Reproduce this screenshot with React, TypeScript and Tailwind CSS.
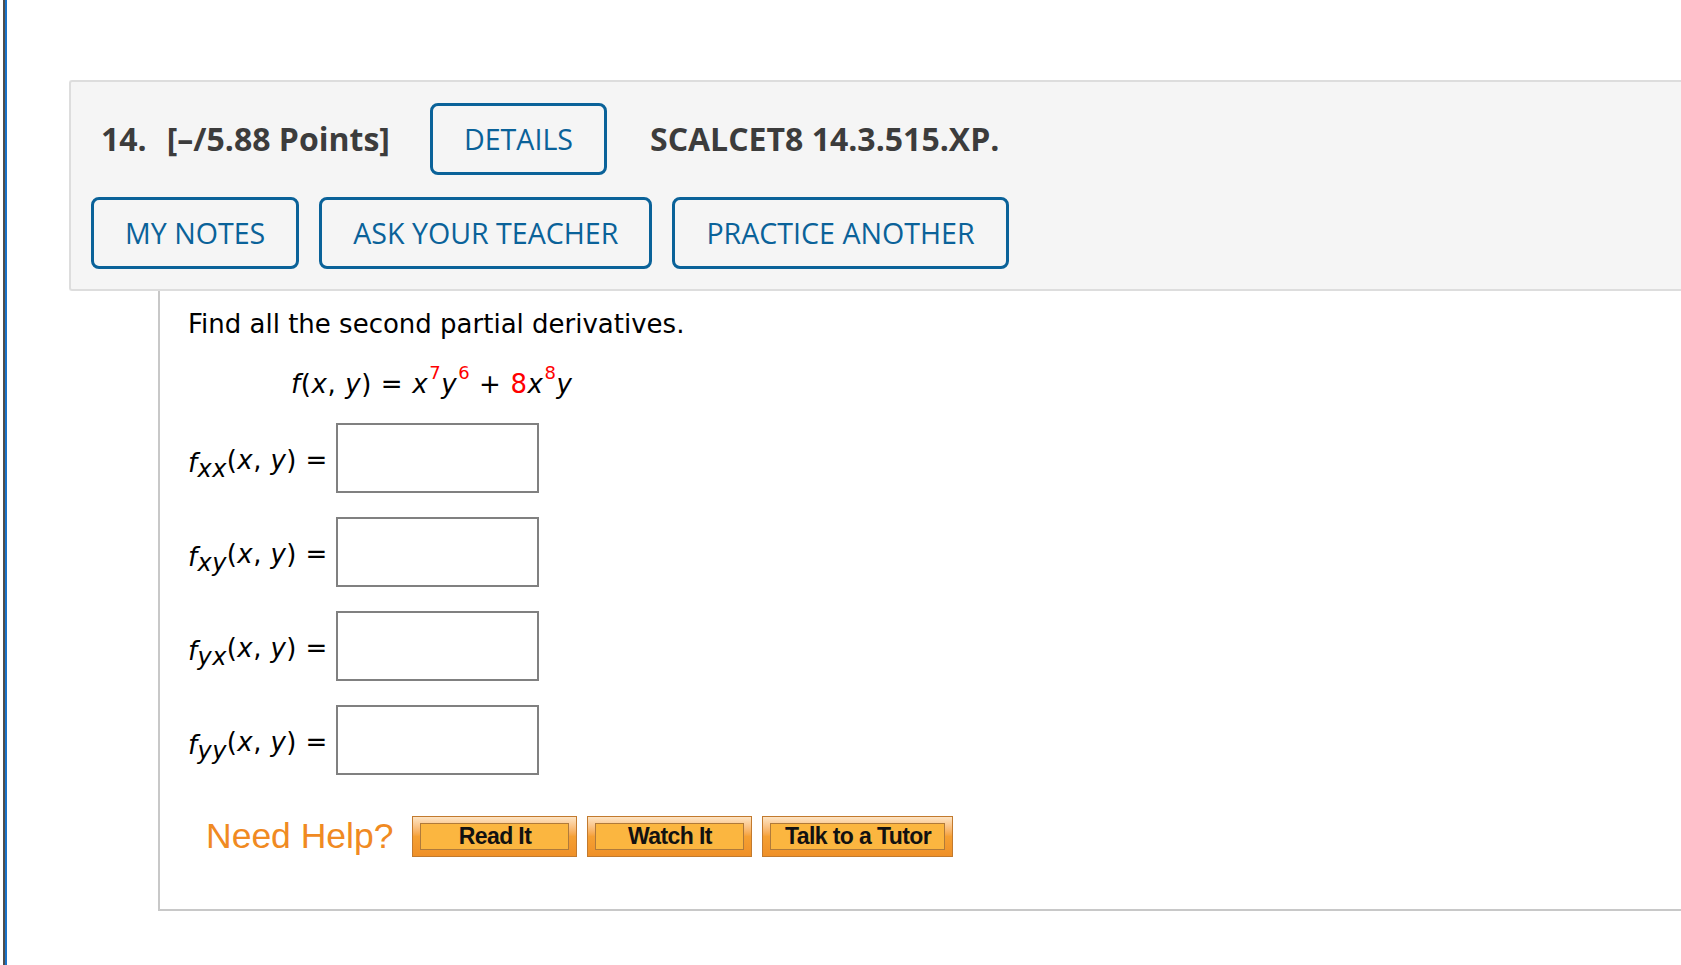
import React from "react";

const hdrFont = { fontFamily: '"Open Sans", "Liberation Sans", sans-serif' };
const bodyFont = { fontFamily: '"DejaVu Sans", Verdana, sans-serif' };
const helpFont = { fontFamily: '"Liberation Sans", Arial, sans-serif' };

function BlueButton({ children }: { children: React.ReactNode }) {
  return (
    <div className="flex h-[72px] items-center rounded-[8px] border-[3px] border-[#0a6299] px-[31px] text-[28.6px] font-normal leading-[40px] text-[#0a6299]">
      {children}
    </div>
  );
}

function Sup({ children }: { children: React.ReactNode }) {
  return (
    <span className="relative -top-[14px] ml-[1px] text-[18px] text-[#ff0000]">{children}</span>
  );
}

function Label({ sub }: { sub: string }) {
  return (
    <div
      className="mt-[22px] flex h-[30px] w-[148px] shrink-0 items-baseline whitespace-nowrap text-[26px] leading-[30px] tracking-[0.4px] text-black"
      style={bodyFont}
    >
      <span className="relative top-[3px] italic">f</span>
      <span className="relative top-[8px] text-[24px] italic">{sub}</span>
      <span>(</span>
      <span className="italic">x</span>
      <span>,&nbsp;</span>
      <span className="italic">y</span>
      <span>)&nbsp;=</span>
    </div>
  );
}

function AnswerRow({ sub }: { sub: string }) {
  return (
    <div className="flex items-start">
      <Label sub={sub} />
      <div className="h-[70px] w-[203px] border-2 border-[#808080] bg-white" />
    </div>
  );
}

function HelpButton({ label, w }: { label: string; w: string }) {
  return (
    <div
      className={`flex h-[41px] ${w} border border-[#c27a2e] bg-linear-to-b from-[#fde4c4] via-[#f5a033] to-[#ef9028] px-[7px] py-[6px]`}
    >
      <div
        className="flex flex-1 items-center justify-center border border-[#b07a3a] bg-[#fbb640] text-[23px] font-bold leading-none tracking-[-0.6px] text-[#111]"
        style={helpFont}
      >
        {label}
      </div>
    </div>
  );
}

export default function App() {
  return (
    <div className="flex h-[965px] w-full overflow-hidden bg-white">
      <div className="ml-[3px] w-[2px] shrink-0 bg-[#4d4d4d]" />
      <div className="w-[2px] shrink-0 bg-[#1a73c9]" />
      <div className="flex flex-1 flex-col pt-[80px]">
        {/* header panel */}
        <div
          className="ml-[62px] flex h-[211px] flex-col gap-[22px] rounded-l-[3px] border-2 border-r-0 border-[#dddddd] bg-[#f5f5f5] pl-[20px] pt-[21px]"
          style={hdrFont}
        >
          <div className="flex h-[72px] items-center whitespace-nowrap text-[32px] font-bold leading-[44px] text-[#3c3c3c]">
            <span className="ml-[10px]">14.</span>
            <span className="ml-[20px]">[–/5.88 Points]</span>
            <div className="ml-[40px]">
              <BlueButton>DETAILS</BlueButton>
            </div>
            <span className="ml-[43px]">SCALCET8 14.3.515.XP.</span>
          </div>
          <div className="flex gap-[20px]">
            <BlueButton>MY NOTES</BlueButton>
            <BlueButton>ASK YOUR TEACHER</BlueButton>
            <BlueButton>PRACTICE ANOTHER</BlueButton>
          </div>
        </div>

        {/* question body */}
        <div className="ml-[151px] border-b-2 border-l-2 border-[#c8c8c8] pb-[52px] pl-[28px] pt-[18px]">
          <div className="text-[26px] leading-[30px] text-black" style={bodyFont}>
            Find all the second partial derivatives.
          </div>
          <div
            className="ml-[103px] mt-[30px] h-[30px] whitespace-nowrap text-[26px] leading-[30px] tracking-[0.6px] text-black"
            style={bodyFont}
          >
            <span className="italic">f</span>(<span className="italic">x</span>,{" "}
            <span className="italic">y</span>) = <span className="italic">x</span>
            <Sup>7</Sup>
            <span className="italic">y</span>
            <Sup>6</Sup> + <span className="text-[#ff0000]">8</span>
            <span className="italic">x</span>
            <Sup>8</Sup>
            <span className="italic">y</span>
          </div>

          <div className="mt-[24px] flex flex-col gap-[24px]">
            <AnswerRow sub="xx" />
            <AnswerRow sub="xy" />
            <AnswerRow sub="yx" />
            <AnswerRow sub="yy" />
          </div>

          <div className="mt-[41px] flex items-center">
            <span
              className="ml-[18px] mr-[19px] text-[35.5px] leading-[41px] text-[#f08a22]"
              style={helpFont}
            >
              Need Help?
            </span>
            <div className="flex gap-[10px]">
              <HelpButton label="Read It" w="w-[165px]" />
              <HelpButton label="Watch It" w="w-[165px]" />
              <HelpButton label="Talk to a Tutor" w="w-[191px]" />
            </div>
          </div>
        </div>
      </div>
    </div>
  );
}
